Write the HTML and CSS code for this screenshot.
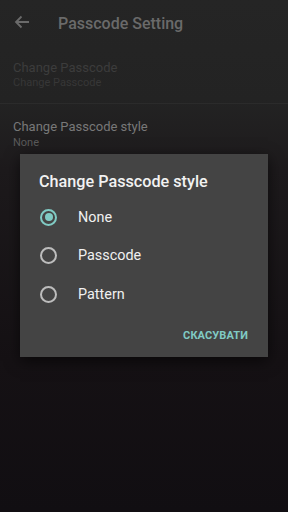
FILE: index.html
```html
<!DOCTYPE html>
<html>
<head>
<meta charset="utf-8">
<link rel="stylesheet" href="styles.css">
</head>
<body>
<div class="screen">
  <header class="toolbar">
    <svg class="back" width="16" height="14" viewBox="0 0 16 14"><path d="M15 7H2M7.5 1.5L2 7l5.5 5.5" fill="none" stroke="#6a6a6a" stroke-width="1.8"/></svg>
    <span class="toolbar-title">Passcode Setting</span>
  </header>
  <div class="pref pref-disabled">
    <div class="pref-title">Change Passcode</div>
    <div class="pref-sub">Change Passcode</div>
  </div>
  <div class="pref pref-style">
    <div class="pref-title">Change Passcode style</div>
    <div class="pref-sub">None</div>
  </div>
  <div class="dialog">
    <div class="dialog-title">Change Passcode style</div>
    <ul class="options">
      <li class="option"><span class="radio checked"></span><span class="label">None</span></li>
      <li class="option"><span class="radio"></span><span class="label">Passcode</span></li>
      <li class="option"><span class="radio"></span><span class="label">Pattern</span></li>
    </ul>
    <div class="actions"><span class="btn">СКАСУВАТИ</span></div>
  </div>
</div>
</body>
</html>
```
FILE: styles.css
```css
html, body { margin: 0; padding: 0; }
body {
  width: 288px; height: 512px; overflow: hidden;
  font-family: Roboto, "Noto Sans", sans-serif;
}
.screen {
  width: 288px; height: 512px; position: relative;
  background: linear-gradient(180deg, #252525 0px, #232323 100px, #1d1a1c 170px, #151114 360px, #110e12 512px);
}
.toolbar {
  height: 48px; display: flex; align-items: center; padding-left: 14px; box-sizing: border-box;
}
.back { display: block; margin-top: -4px; }
.toolbar-title {
  margin-left: 28px; color: #6a6a6a; font-size: 16px; font-weight: 500; margin-top: -2px;
}
.pref { padding: 12px 13px 13px; }
.pref-disabled { border-bottom: 1px solid #2b2b2b; }
.pref-style { padding-top: 15px; }
.pref-style .pref-sub { margin-top: 1px; }
.pref-title { font-size: 13px; line-height: 16px; }
.pref-sub { font-size: 11px; line-height: 14px; }
.pref-style .pref-title { color: #787878; }
.pref-style .pref-sub { color: #5a5a5a; }
.pref-disabled .pref-title { color: #3c3c3c; }
.pref-disabled .pref-sub { color: #373737; }

.dialog {
  position: absolute; left: 20px; top: 154px; width: 248px; height: 203px;
  background: #444; box-shadow: 0 4px 14px rgba(0,0,0,0.6);
  box-sizing: border-box; padding: 18px 0 0 19px;
}
.dialog-title { color: #f2f2f2; font-size: 16.2px; font-weight: 500; line-height: 20px; }
.options { list-style: none; margin: 6px 0 0; padding: 0; }
.option { height: 38.5px; display: flex; align-items: center; }
.radio {
  width: 13px; height: 13px; border: 2px solid #bdbdbd; border-radius: 50%;
  margin-left: 1px; position: relative; box-sizing: content-box;
}
.radio.checked { border-color: #80cbc4; }
.radio.checked::after {
  content: ""; position: absolute; left: 2.5px; top: 2.5px; width: 8px; height: 8px;
  border-radius: 50%; background: #80cbc4;
}
.label { margin-left: 21px; color: #f0f0f0; font-size: 14.4px; }
.actions { display: flex; justify-content: flex-end; padding-right: 20px; margin-top: 15px; }
.btn { color: #80cbc4; font-size: 11px; font-weight: 700; letter-spacing: 0.1px; }
```
